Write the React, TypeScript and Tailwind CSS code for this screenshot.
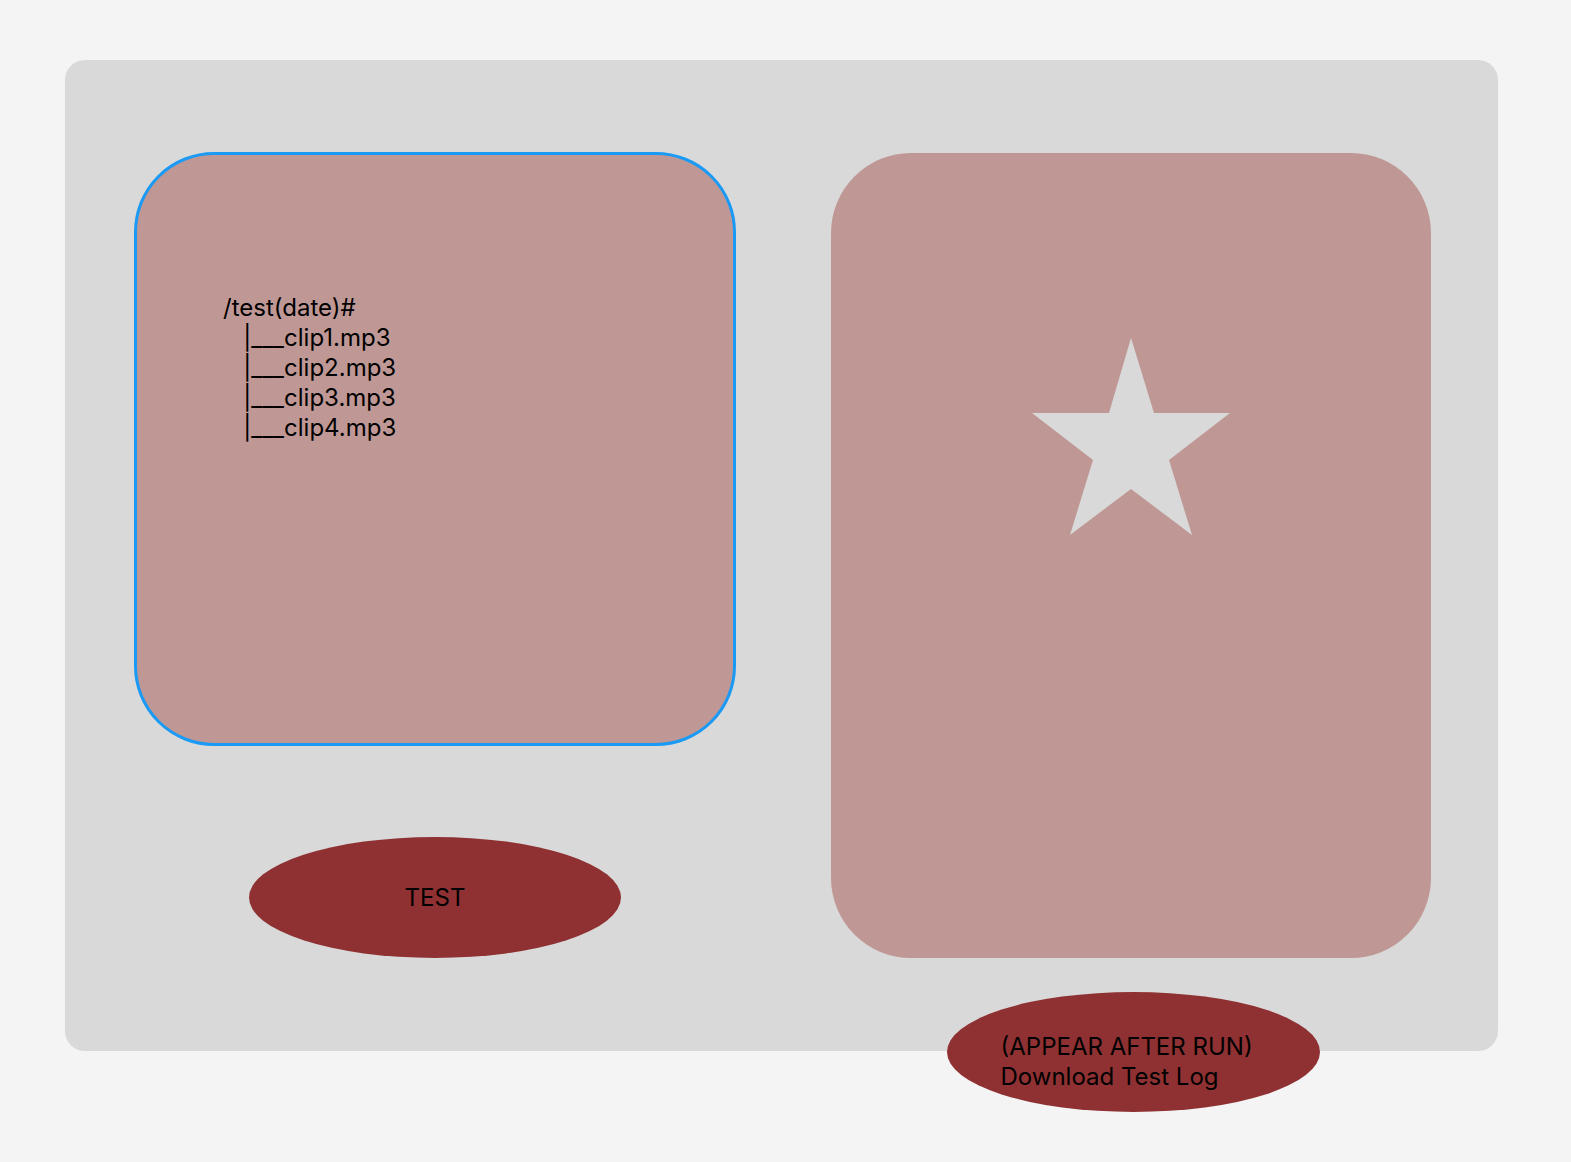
const tree = ["/test(date)#", "   |___clip1.mp3", "   |___clip2.mp3", "   |___clip3.mp3", "   |___clip4.mp3"];

function Star() {
  return (
    <svg width="200" height="200" viewBox="1030 335 200 200" className="block">
      <polygon
        fill="#d9d9d9"
        points="1130,337 1108,412 1031,412 1092,459 1069,534 1130,488 1191,534 1168,459 1229,412 1153,412"
      />
    </svg>
  );
}

export default function App() {
  return (
    <div className="min-h-screen bg-[#f4f4f4] pt-[60px] pl-[65px] font-['Inter',sans-serif] text-black">
      <div className="w-[1433px] h-[991px] bg-[#d9d9d9] rounded-[20px] flex pt-[92px] pl-[69px] gap-[95px]">
        <div className="flex flex-col items-center">
          <div className="shrink-0 w-[602px] h-[594px] rounded-[80px] border-[3px] border-[#1a9af5] bg-[#bf9896] pt-[138px] pl-[86px]">
            <div className="whitespace-pre text-[24px] leading-[30px]">
              {tree.map((line) => (
                <div key={line}>{line}</div>
              ))}
            </div>
          </div>
          <button className="shrink-0 mt-[91px] w-[372px] h-[121px] rounded-[50%] bg-[#8f3132] text-[24px] text-black">
            TEST
          </button>
        </div>
        <div className="flex flex-col items-center pt-px">
          <div className="shrink-0 w-[600px] h-[805px] rounded-[80px] bg-[#bf9896] flex justify-center pt-[183px]">
            <Star />
          </div>
          <div className="shrink-0 mt-[34px] ml-[4px] w-[373px] h-[120px] rounded-[50%] bg-[#8f3132] flex flex-col justify-center pt-[20px] pl-[54px] text-[24px] leading-[30px]">
            <div>(APPEAR AFTER RUN)</div>
            <div>Download Test Log</div>
          </div>
        </div>
      </div>
    </div>
  );
}
